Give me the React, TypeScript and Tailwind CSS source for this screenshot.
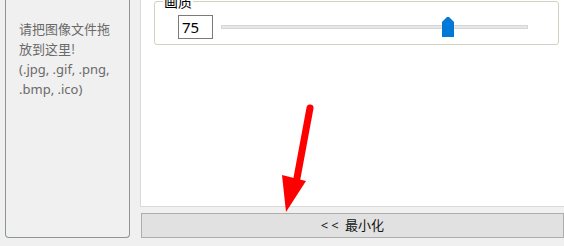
export default function App() {
  return (
    <div className="relative flex w-[564px] h-[246px] overflow-hidden bg-[#f0f0f0] font-['Noto_Sans','Noto_Sans_CJK_SC',sans-serif]">
      {/* drop zone */}
      <div className="ml-[5px] w-[125px] h-[238px] border border-t-0 border-[#8e9595] rounded-b-[4px] pl-[13px] pr-[14px] pt-[19px] text-[13px] leading-[20px] text-[#6a6a6a]">
        <div className="font-['Noto_Sans_CJK_SC',sans-serif]">请把图像文件拖放到这里!</div>
        <div>(.jpg, .gif, .png, .bmp, .ico)</div>
      </div>

      {/* right side */}
      <div className="ml-[10px] flex-1 flex flex-col">
        <div className="h-[207px] bg-white border-l border-b border-[#d9d9d9] pl-[13px] pt-[1px]">
          <div className="relative w-[405px] h-[44px] border border-[#d3d1c2] rounded-[3px]">
            <span className="absolute left-[8px] -top-[10px] bg-white px-[1px] text-[14px] leading-[18px] text-black font-['Noto_Sans_CJK_SC',sans-serif]">
              画质
            </span>
            <div className="flex items-center pl-[23px] pt-[13px]">
              <div className="w-[35px] h-[24px] border border-[#7a7a7a] pl-[3px] text-[15px] leading-[22px] text-black">
                75
              </div>
              <div className="relative ml-[8px] w-[307px] h-[24px] flex items-center">
                <div className="w-full h-[4px] bg-[#e7e7e7] border border-[#d6d6d6]" />
                <svg className="absolute left-[221px] top-[1px]" width="12" height="21" viewBox="0 0 12 21">
                  <polygon points="0,6 5,1 7,1 12,6 12,21 0,21" fill="#0078d7" />
                </svg>
              </div>
            </div>
          </div>
        </div>
        <button className="mt-[6px] ml-[1px] h-[25px] bg-[#e1e1e1] border border-[#adadad] text-[13px] font-normal text-[#111] font-['Noto_Sans','Noto_Sans_CJK_SC',sans-serif]">
          <span className="tracking-[3px]">&lt;&lt;</span> 最小化
        </button>
      </div>

      {/* red arrow annotation */}
      <svg className="absolute inset-0 pointer-events-none" width="564" height="246" viewBox="0 0 564 246">
        <line x1="310" y1="108" x2="297" y2="178" stroke="#ff0000" strokeWidth="7" strokeLinecap="round" />
        <polygon points="282,175 306,181 286,212" fill="#ff0000" />
      </svg>
    </div>
  )
}
